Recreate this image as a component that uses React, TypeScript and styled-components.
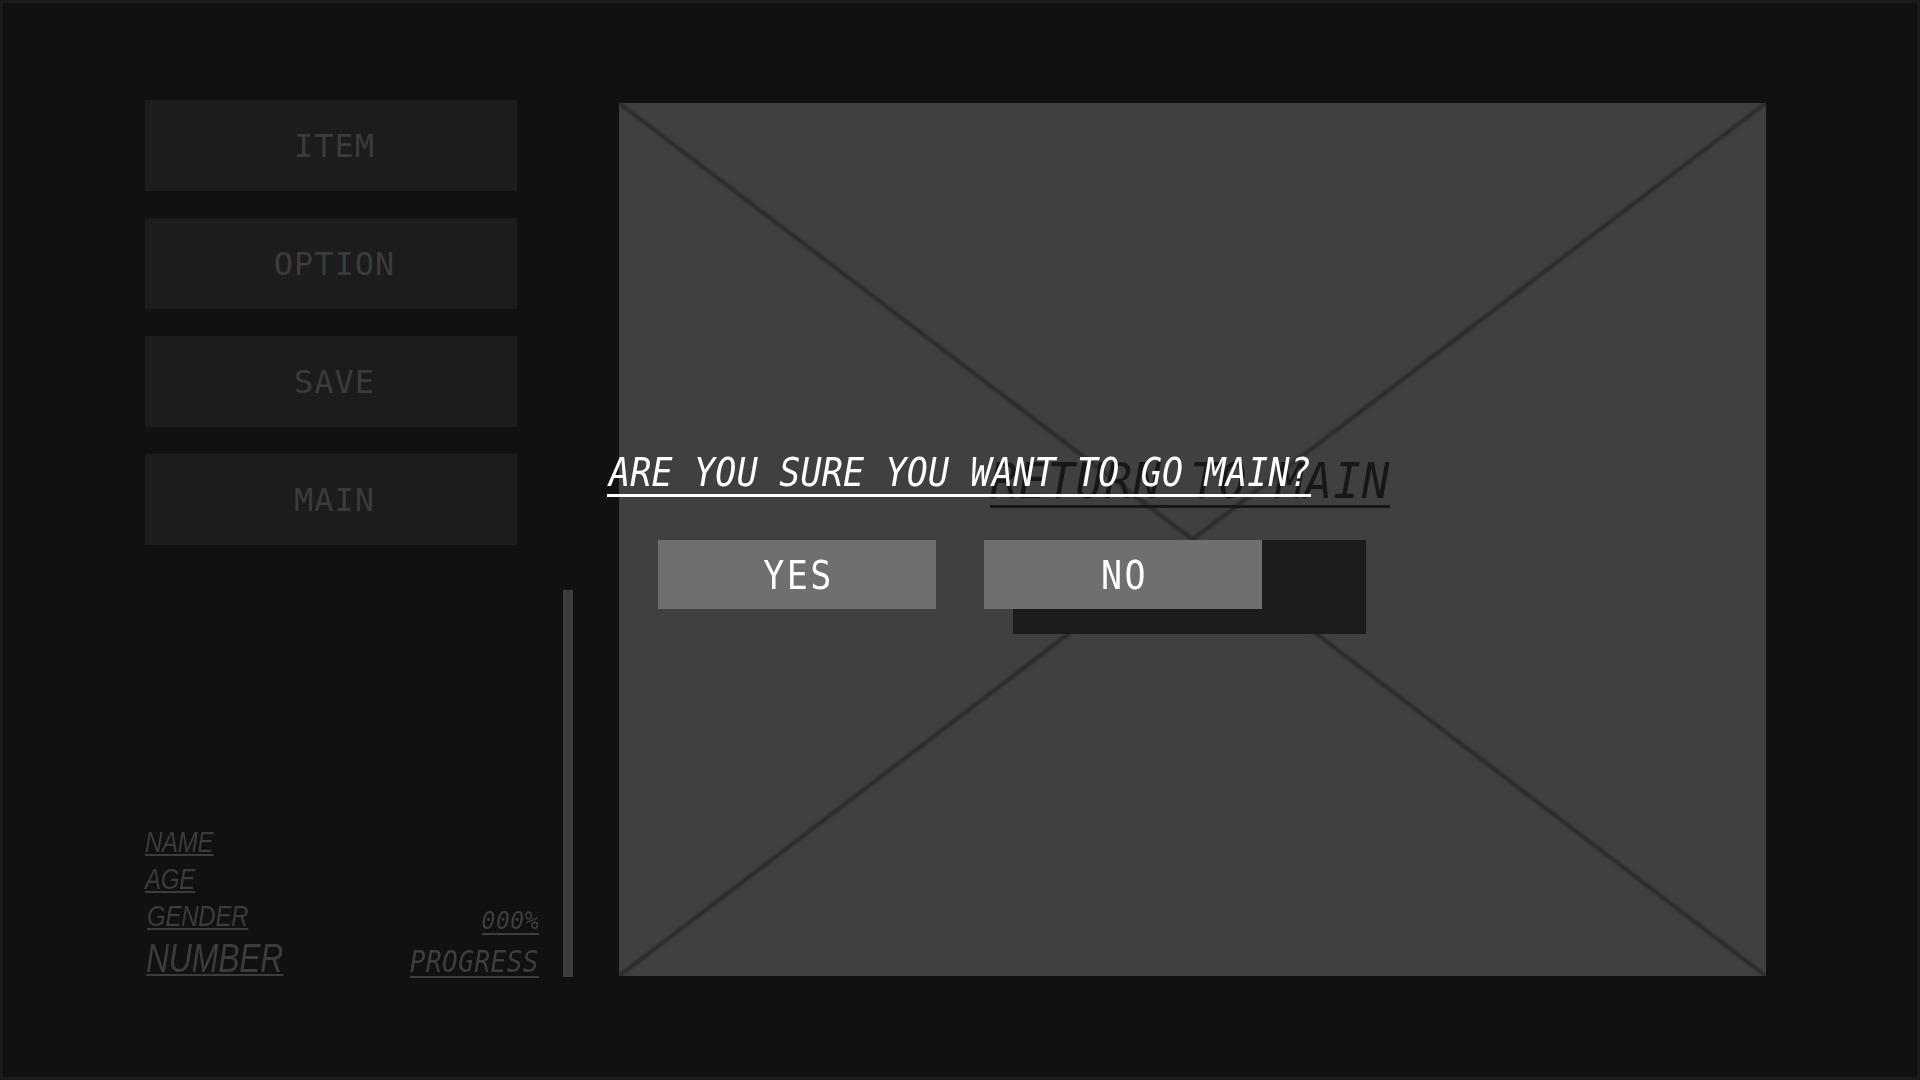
import React from "react";
import styled, { createGlobalStyle } from "styled-components";

const GlobalStyle = createGlobalStyle`
  html, body {
    margin: 0;
    padding: 0;
    background: #111111;
  }
  body {
    font-family: "DejaVu Sans Mono", monospace;
  }
  *, *::before, *::after {
    box-sizing: border-box;
  }
`;

const Screen = styled.div`
  position: relative;
  width: 1920px;
  height: 1080px;
  border: 3px solid #1b1b1b;
  background: #111111;
  overflow: hidden;
`;

const Main = styled.main`
  display: flex;
  align-items: flex-start;
  height: 100%;
  padding: 97px 0 0 142px;
`;

const Sidebar = styled.aside`
  display: flex;
  flex-direction: column;
  justify-content: space-between;
  flex: none;
  width: 394px;
  height: 878px;
`;

const Menu = styled.nav`
  display: flex;
  flex-direction: column;
  gap: 27px;
`;

const MenuButton = styled.button`
  display: flex;
  align-items: center;
  justify-content: center;
  width: 372px;
  height: 91px;
  margin: 0;
  padding: 0 0 0 7px;
  border: 0;
  background: #1c1c1c;
  color: #3b3b3b;
  font-family: "DejaVu Sans Mono", monospace;
  font-size: 32px;
  line-height: 1;
  letter-spacing: 1px;
  cursor: pointer;
`;

const Status = styled.div`
  display: flex;
  justify-content: space-between;
  align-items: flex-end;
`;

const Profile = styled.div`
  display: flex;
  flex-direction: column;
  align-items: flex-start;
`;

const ProfileLabel = styled.span<{ $size: number; $line: number; $indent?: number; $gapTop?: number }>`
  display: block;
  margin: ${(p) => p.$gapTop ?? 0}px 0 0 ${(p) => p.$indent ?? 0}px;
  font-family: "Liberation Sans", Arial, sans-serif;
  font-style: italic;
  font-size: ${(p) => p.$size}px;
  line-height: ${(p) => p.$line}px;
  letter-spacing: -0.3px;
  color: #3c3c3c;
  text-decoration: underline;
  text-decoration-thickness: 2px;
  text-underline-offset: 2px;
  transform: scaleX(0.8);
  transform-origin: left center;
`;

const Progress = styled.div`
  display: flex;
  flex-direction: column;
  align-items: flex-end;
  gap: 15px;
`;

const MonoTag = styled.span<{
  $size: number;
  $spacing: number;
  $color: string;
  $rule: number;
  $pad?: number;
  $indent?: number;
}>`
  display: inline-block;
  padding: 0 0 ${(p) => p.$pad ?? 0}px ${(p) => p.$indent ?? 0}px;
  border-bottom: ${(p) => p.$rule}px solid ${(p) => p.$color};
  font-family: "DejaVu Sans Mono", monospace;
  font-style: italic;
  font-size: ${(p) => p.$size}px;
  line-height: 1;
  letter-spacing: ${(p) => p.$spacing}px;
  color: ${(p) => p.$color};
  white-space: nowrap;
`;

const Stretch = styled.span<{ $y: number }>`
  display: inline-block;
  transform: scaleY(${(p) => p.$y});
  transform-origin: 50% 84.6%;
`;

const ScrollTrack = styled.div`
  flex: none;
  width: 10px;
  height: 387px;
  margin: 490px 0 0 24px;
  background: #3c3c3c;
`;

const Stage = styled.section`
  position: relative;
  flex: none;
  width: 1147px;
  height: 873px;
  margin: 3px 0 0 46px;
  background: #404040;
`;

const Placeholder = styled.svg`
  position: absolute;
  inset: 0;
  width: 100%;
  height: 100%;

  line {
    stroke: #2b2b2b;
    stroke-width: 4;
    filter: blur(1.1px);
  }
`;

const ReturnGroup = styled.div`
  position: absolute;
  left: 371px;
  top: 356px;
  display: flex;
  flex-direction: column;
  align-items: flex-start;
`;

const ReturnShade = styled.div`
  width: 353px;
  height: 94px;
  margin: 32px 0 0 23px;
  background: #1c1c1c;
`;

const Dialog = styled.div`
  position: absolute;
  left: 604px;
  top: 454px;
  z-index: 2;
  display: flex;
  flex-direction: column;
  align-items: flex-start;
  gap: 43px;
`;

const Choices = styled.div`
  display: flex;
  gap: 48px;
  padding-left: 51px;
`;

const Choice = styled.button`
  display: flex;
  align-items: center;
  justify-content: center;
  width: 278px;
  height: 69px;
  margin: 0;
  padding: 5px 0 0 3px;
  border: 0;
  background: #6f6f6f;
  color: #ffffff;
  font-family: "DejaVu Sans Mono", monospace;
  font-size: 35px;
  line-height: 1;
  letter-spacing: 2.5px;
  cursor: pointer;
`;

const menuItems = ["ITEM", "OPTION", "SAVE", "MAIN"];

export default function App() {
  return (
    <>
      <GlobalStyle />
      <Screen>
        <Main>
          <Sidebar>
            <Menu>
              {menuItems.map((m) => (
                <MenuButton key={m}>{m}</MenuButton>
              ))}
            </Menu>
            <Status>
              <Profile>
                <ProfileLabel $size={30} $line={37}>NAME</ProfileLabel>
                <ProfileLabel $size={30} $line={37}>AGE</ProfileLabel>
                <ProfileLabel $size={30} $line={37} $indent={2}>GENDER</ProfileLabel>
                <ProfileLabel $size={40} $line={40} $gapTop={4} $indent={1}>NUMBER</ProfileLabel>
              </Profile>
              <Progress>
                <MonoTag $size={23} $spacing={0.5} $color="#3e3e3e" $rule={2}>
                  <Stretch $y={1.08}>000%</Stretch>
                </MonoTag>
                <MonoTag $size={26} $spacing={0.5} $color="#3e3e3e" $rule={2}>
                  <Stretch $y={1.18}>PROGRESS</Stretch>
                </MonoTag>
              </Progress>
            </Status>
          </Sidebar>
          <ScrollTrack />
          <Stage>
            <Placeholder viewBox="0 0 1147 873" preserveAspectRatio="none">
              <line x1="0" y1="0" x2="1147" y2="873" />
              <line x1="1147" y1="0" x2="0" y2="873" />
            </Placeholder>
            <ReturnGroup>
              <MonoTag $size={46} $spacing={0.9} $color="#171717" $rule={3}>
                <Stretch $y={1.1}>RETURN TO MAIN</Stretch>
              </MonoTag>
              <ReturnShade />
            </ReturnGroup>
          </Stage>
        </Main>
        <Dialog>
          <MonoTag $size={35} $spacing={0.2} $color="#ffffff" $rule={3} $pad={2} $indent={2}>
            <Stretch $y={1.14}>ARE YOU SURE YOU WANT TO GO MAIN?</Stretch>
          </MonoTag>
          <Choices>
            <Choice>
              <Stretch $y={1.1}>YES</Stretch>
            </Choice>
            <Choice>
              <Stretch $y={1.1}>NO</Stretch>
            </Choice>
          </Choices>
        </Dialog>
      </Screen>
    </>
  );
}
